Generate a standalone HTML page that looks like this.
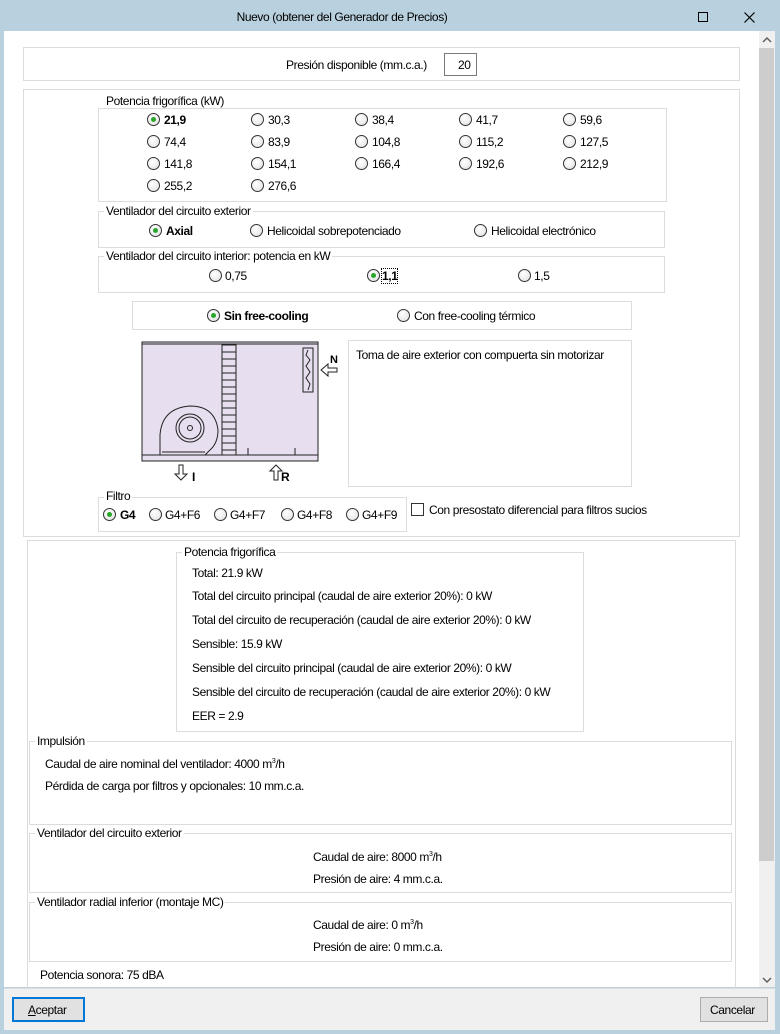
<!DOCTYPE html>
<html><head><meta charset="utf-8"><style>
*{box-sizing:border-box;margin:0;padding:0}
body{width:780px;height:1034px;overflow:hidden;background:#b9d1de;font-family:"Liberation Sans",sans-serif;font-size:12px;letter-spacing:-0.4px;color:#000;position:relative}
.a{position:absolute}
.t{position:absolute;white-space:nowrap;line-height:14px}
.box{position:absolute;border:1px solid #dcdcdc}
.lg{position:absolute;background:#fff;padding:0 2px;white-space:nowrap;line-height:14px}
.r{position:absolute;width:13px;height:13px;border-radius:50%;border:1px solid #333;background:radial-gradient(circle at 40% 35%,#fff,#e0e0e0)}
.r.on::after{content:"";position:absolute;left:3px;top:3px;width:5px;height:5px;border-radius:50%;background:#2aa52a}
b{font-weight:bold}
</style></head><body>
<div class="a" style="left:0;top:0;width:780px;height:31px;background:#b9d1de"></div>
<div class="t" style="left:0;width:684px;text-align:center;top:10px;font-size:12px">Nuevo (obtener del Generador de Precios)</div>
<div class="a" style="left:698px;top:12px;width:10px;height:10px;border:1px solid #000"></div>
<svg class="a" style="left:744px;top:12px" width="11" height="11"><path d="M0.5 0.5L10.5 10.5M10.5 0.5L0.5 10.5" stroke="#000" stroke-width="1.2"/></svg>
<div class="a" style="left:4px;top:31px;width:771px;height:956px;background:#fff"></div>
<div class="a" style="left:759px;top:31px;width:16px;height:956px;background:#f0f0f0"></div>
<div class="a" style="left:759px;top:48px;width:15px;height:813px;background:#cdcdcd"></div>
<svg class="a" style="left:762px;top:36px" width="10" height="8"><path d="M1 6L5 2L9 6" fill="none" stroke="#606060" stroke-width="1.5"/></svg>
<svg class="a" style="left:762px;top:976px" width="10" height="8"><path d="M1 2L5 6L9 2" fill="none" stroke="#606060" stroke-width="1.5"/></svg>

<div class="box" style="left:23px;top:47px;width:717px;height:34px"></div>
<div class="t" style="left:286px;top:58px">Presión disponible (mm.c.a.)</div>
<div class="a" style="left:444px;top:53px;width:33px;height:23px;border:1px solid #7a7a7a"></div>
<div class="t" style="left:458px;top:58px">20</div>

<div class="box" style="left:23px;top:89px;width:717px;height:448px"></div>

<div class="box" style="left:98px;top:108px;width:569px;height:94px"></div>
<div class="lg" style="left:104px;top:94px">Potencia frigorífica (kW)</div>
<div class="r on" style="left:147px;top:113px"></div><div class="t" style="left:164px;top:113px"><b>21,9</b></div>
<div class="r" style="left:251px;top:113px"></div><div class="t" style="left:268px;top:113px">30,3</div>
<div class="r" style="left:355px;top:113px"></div><div class="t" style="left:372px;top:113px">38,4</div>
<div class="r" style="left:459px;top:113px"></div><div class="t" style="left:476px;top:113px">41,7</div>
<div class="r" style="left:563px;top:113px"></div><div class="t" style="left:580px;top:113px">59,6</div>
<div class="r" style="left:147px;top:135px"></div><div class="t" style="left:164px;top:135px">74,4</div>
<div class="r" style="left:251px;top:135px"></div><div class="t" style="left:268px;top:135px">83,9</div>
<div class="r" style="left:355px;top:135px"></div><div class="t" style="left:372px;top:135px">104,8</div>
<div class="r" style="left:459px;top:135px"></div><div class="t" style="left:476px;top:135px">115,2</div>
<div class="r" style="left:563px;top:135px"></div><div class="t" style="left:580px;top:135px">127,5</div>
<div class="r" style="left:147px;top:157px"></div><div class="t" style="left:164px;top:157px">141,8</div>
<div class="r" style="left:251px;top:157px"></div><div class="t" style="left:268px;top:157px">154,1</div>
<div class="r" style="left:355px;top:157px"></div><div class="t" style="left:372px;top:157px">166,4</div>
<div class="r" style="left:459px;top:157px"></div><div class="t" style="left:476px;top:157px">192,6</div>
<div class="r" style="left:563px;top:157px"></div><div class="t" style="left:580px;top:157px">212,9</div>
<div class="r" style="left:147px;top:179px"></div><div class="t" style="left:164px;top:179px">255,2</div>
<div class="r" style="left:251px;top:179px"></div><div class="t" style="left:268px;top:179px">276,6</div>

<div class="box" style="left:98px;top:211px;width:567px;height:37px"></div>
<div class="lg" style="left:104px;top:204px">Ventilador del circuito exterior</div>
<div class="r on" style="left:149px;top:224px"></div><div class="t" style="left:166px;top:224px"><b>Axial</b></div>
<div class="r" style="left:250px;top:224px"></div><div class="t" style="left:267px;top:224px">Helicoidal sobrepotenciado</div>
<div class="r" style="left:474px;top:224px"></div><div class="t" style="left:491px;top:224px">Helicoidal electrónico</div>

<div class="box" style="left:98px;top:256px;width:567px;height:37px"></div>
<div class="lg" style="left:104px;top:249px">Ventilador del circuito interior: potencia en kW</div>
<div class="r" style="left:209px;top:269px"></div><div class="t" style="left:225px;top:269px">0,75</div>
<div class="r on" style="left:367px;top:269px"></div><div class="t" style="left:382px;top:269px;outline:1px dotted #000"><b>1,1</b></div>
<div class="r" style="left:518px;top:269px"></div><div class="t" style="left:534px;top:269px">1,5</div>

<div class="box" style="left:132px;top:301px;width:500px;height:29px"></div>
<div class="r on" style="left:207px;top:309px"></div><div class="t" style="left:224px;top:309px"><b>Sin free-cooling</b></div>
<div class="r" style="left:397px;top:309px"></div><div class="t" style="left:414px;top:309px">Con free-cooling térmico</div>

<svg class="a" style="left:140px;top:340px" width="205" height="145">
<rect x="2" y="2" width="176" height="119" fill="#e7deef" stroke="#222"/>
<line x1="2" y1="4" x2="178" y2="4" stroke="#222"/>
<line x1="2" y1="115" x2="178" y2="115" stroke="#222"/>
<rect x="82" y="5" width="14" height="110" fill="#e7deef" stroke="#222"/>
<g stroke="#222">
<line x1="82" y1="12" x2="96" y2="12"/><line x1="82" y1="19" x2="96" y2="19"/><line x1="82" y1="26" x2="96" y2="26"/><line x1="82" y1="33" x2="96" y2="33"/><line x1="82" y1="40" x2="96" y2="40"/><line x1="82" y1="47" x2="96" y2="47"/><line x1="82" y1="54" x2="96" y2="54"/><line x1="82" y1="61" x2="96" y2="61"/><line x1="82" y1="68" x2="96" y2="68"/><line x1="82" y1="75" x2="96" y2="75"/><line x1="82" y1="82" x2="96" y2="82"/><line x1="82" y1="89" x2="96" y2="89"/><line x1="82" y1="96" x2="96" y2="96"/><line x1="82" y1="103" x2="96" y2="103"/><line x1="82" y1="110" x2="96" y2="110"/>
<line x1="108" y1="108" x2="108" y2="115"/><line x1="155" y1="108" x2="155" y2="115"/>
</g>
<rect x="163" y="8" width="10" height="44" fill="none" stroke="#222"/>
<path d="M168 10L166 15L170 20L166 26L170 32L166 38L170 44L168 50" fill="none" stroke="#222"/>
<path d="M20 115L20 95Q22 68 50 66Q75 66 78 90Q78 103 70 110L65 115" fill="none" stroke="#222"/>
<circle cx="50" cy="88" r="14" fill="none" stroke="#222"/>
<circle cx="50" cy="88" r="11" fill="none" stroke="#222"/>
<circle cx="50" cy="88" r="2.5" fill="none" stroke="#222"/>
<path d="M22 112L65 112" stroke="#222"/>
<text x="190" y="23" font-family="Liberation Sans" font-weight="bold" font-size="11">N</text>
<path d="M181 30L188 24V28H197V32H188V36Z" fill="#fff" stroke="#222"/>
<path d="M41 140L35 134H39V125H43V134H47Z" fill="#fff" stroke="#222"/>
<text x="52" y="141" font-family="Liberation Sans" font-weight="bold" font-size="12">I</text>
<path d="M136 125L142 131H138V140H134V131H130Z" fill="#fff" stroke="#222"/>
<text x="141" y="141" font-family="Liberation Sans" font-weight="bold" font-size="12">R</text>
</svg>

<div class="box" style="left:348px;top:340px;width:284px;height:147px"></div>
<div class="t" style="left:356px;top:348px">Toma de aire exterior con compuerta sin motorizar</div>

<div class="box" style="left:98px;top:497px;width:309px;height:35px"></div>
<div class="lg" style="left:104px;top:489px">Filtro</div>
<div class="r on" style="left:103px;top:508px"></div><div class="t" style="left:120px;top:508px"><b>G4</b></div>
<div class="r" style="left:149px;top:508px"></div><div class="t" style="left:165px;top:508px">G4+F6</div>
<div class="r" style="left:214px;top:508px"></div><div class="t" style="left:230px;top:508px">G4+F7</div>
<div class="r" style="left:281px;top:508px"></div><div class="t" style="left:297px;top:508px">G4+F8</div>
<div class="r" style="left:346px;top:508px"></div><div class="t" style="left:362px;top:508px">G4+F9</div>
<div class="a" style="left:411px;top:503px;width:13px;height:13px;border:1px solid #333"></div>
<div class="t" style="left:429px;top:503px">Con presostato diferencial para filtros sucios</div>

<div class="box" style="left:27px;top:540px;width:709px;height:460px"></div>

<div class="box" style="left:176px;top:552px;width:408px;height:180px"></div>
<div class="lg" style="left:182px;top:545px">Potencia frigorífica</div>
<div class="t" style="left:192px;top:566px">Total: 21.9 kW</div>
<div class="t" style="left:192px;top:589px">Total del circuito principal (caudal de aire exterior 20%): 0 kW</div>
<div class="t" style="left:192px;top:613px">Total del circuito de recuperación (caudal de aire exterior 20%): 0 kW</div>
<div class="t" style="left:192px;top:637px">Sensible: 15.9 kW</div>
<div class="t" style="left:192px;top:661px">Sensible del circuito principal (caudal de aire exterior 20%): 0 kW</div>
<div class="t" style="left:192px;top:685px">Sensible del circuito de recuperación (caudal de aire exterior 20%): 0 kW</div>
<div class="t" style="left:192px;top:709px">EER = 2.9</div>

<div class="box" style="left:29px;top:741px;width:703px;height:84px"></div>
<div class="lg" style="left:35px;top:734px">Impulsión</div>
<div class="t" style="left:45px;top:755px">Caudal de aire nominal del ventilador: 4000 m<sup style="font-size:7px">3</sup>/h</div>
<div class="t" style="left:45px;top:779px">Pérdida de carga por filtros y opcionales: 10 mm.c.a.</div>

<div class="box" style="left:29px;top:833px;width:703px;height:60px"></div>
<div class="lg" style="left:35px;top:826px">Ventilador del circuito exterior</div>
<div class="t" style="left:313px;top:848px">Caudal de aire: 8000 m<sup style="font-size:7px">3</sup>/h</div>
<div class="t" style="left:313px;top:872px">Presión de aire: 4 mm.c.a.</div>

<div class="box" style="left:29px;top:902px;width:703px;height:60px"></div>
<div class="lg" style="left:35px;top:895px">Ventilador radial inferior (montaje MC)</div>
<div class="t" style="left:313px;top:916px">Caudal de aire: 0 m<sup style="font-size:7px">3</sup>/h</div>
<div class="t" style="left:313px;top:940px">Presión de aire: 0 mm.c.a.</div>
<div class="t" style="left:40px;top:968px">Potencia sonora: 75 dBA</div>

<div class="a" style="left:4px;top:988px;width:771px;height:42px;background:#f0f0f0;border-top:1px solid #dcdcdc"></div>
<div class="a" style="left:12px;top:997px;width:73px;height:25px;border:2px solid #0078d7;background:#e1e1e1"></div>
<div class="t" style="left:28px;top:1003px"><u>A</u>ceptar</div>
<div class="a" style="left:700px;top:997px;width:68px;height:25px;border:1px solid #adadad;background:#e1e1e1"></div>
<div class="t" style="left:710px;top:1003px">Cancelar</div>
</body></html>
